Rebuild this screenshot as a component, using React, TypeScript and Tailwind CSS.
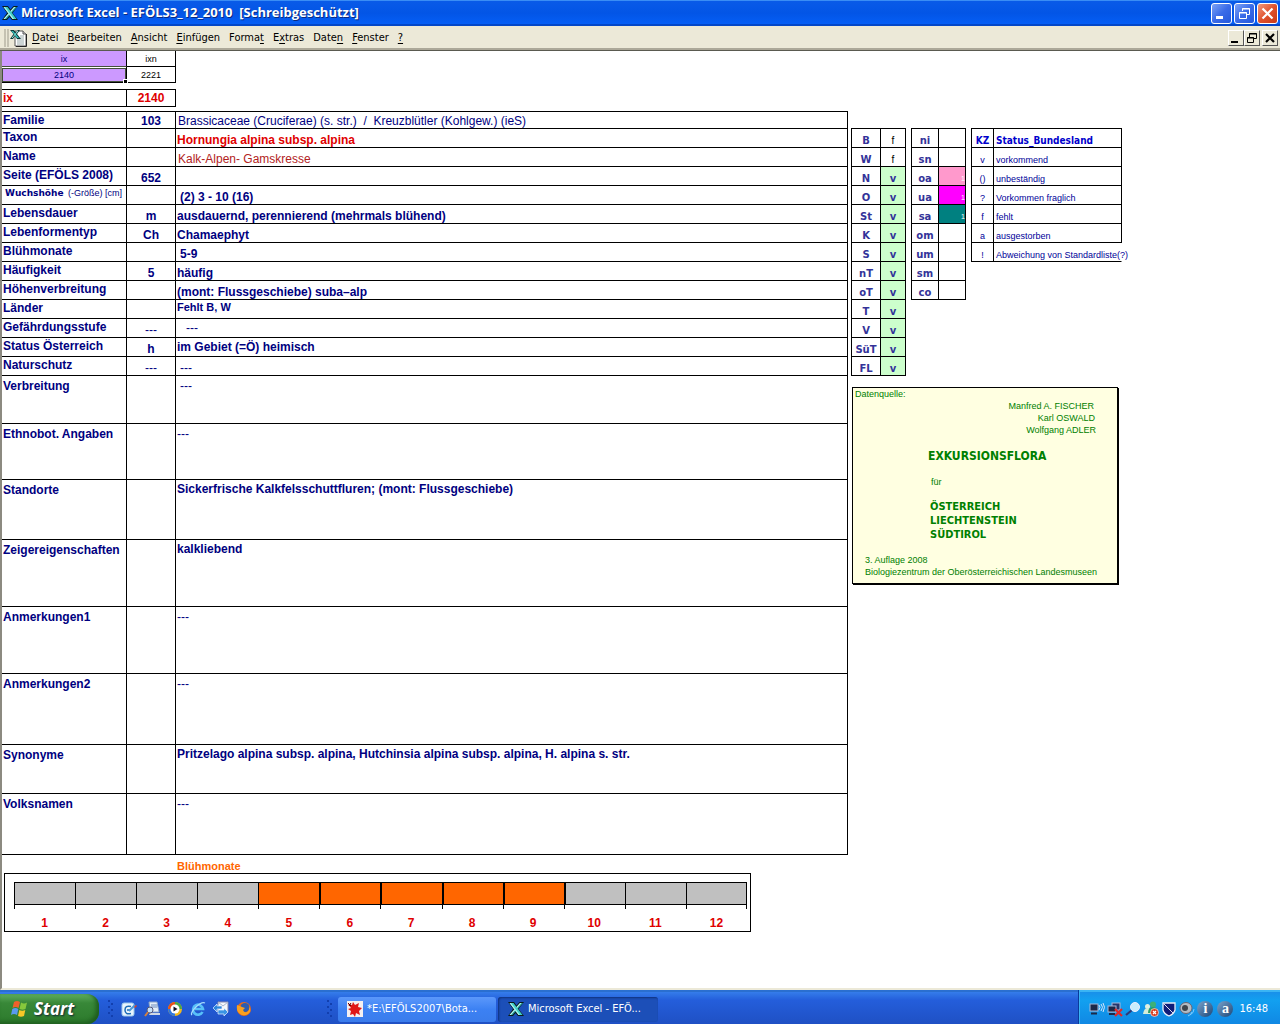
import React from "react";
import clsx from "clsx";

type Row = {
  label: string;
  code?: string;
  value: string;
  height: string;
  valueClass?: string;
};

const rows: Row[] = [
  { label: "Familie", code: "103", value: "Brassicaceae (Cruciferae) (s. str.)  /  Kreuzblütler (Kohlgew.) (ieS)", height: "h-[17px]", valueClass: "pl-0.5 align-bottom font-normal" },
  { label: "Taxon", value: "Hornungia alpina subsp. alpina", height: "h-[19px]", valueClass: "pl-px align-bottom text-[#e00000]" },
  { label: "Name", value: "Kalk-Alpen- Gamskresse", height: "h-[19px]", valueClass: "pl-0.5 align-bottom font-normal text-[#b22222]" },
  { label: "Seite (EFÖLS 2008)", code: "652", value: "", height: "h-[19px]" },
  { label: "Wuchshöhe", value: "(2) 3 - 10 (16)", height: "h-[19px]", valueClass: "pl-1 align-bottom" },
  { label: "Lebensdauer", code: "m", value: "ausdauernd, perennierend (mehrmals blühend)", height: "h-[19px]", valueClass: "pl-px align-bottom" },
  { label: "Lebenformentyp", code: "Ch", value: "Chamaephyt", height: "h-[19px]", valueClass: "pl-px align-bottom" },
  { label: "Blühmonate", value: "5-9", height: "h-[19px]", valueClass: "pl-1 align-bottom" },
  { label: "Häufigkeit", code: "5", value: "häufig", height: "h-[19px]", valueClass: "pl-px align-bottom" },
  { label: "Höhenverbreitung", value: "(mont: Flussgeschiebe) suba–alp", height: "h-[19px]", valueClass: "pl-px align-bottom" },
  { label: "Länder", value: "Fehlt B, W", height: "h-[19px]", valueClass: "pl-px align-top text-[11px]" },
  { label: "Gefährdungsstufe", code: "---", value: "---", height: "h-[19px]", valueClass: "pl-2.5 align-middle font-normal" },
  { label: "Status Österreich", code: "h", value: "im Gebiet (=Ö) heimisch", height: "h-[19px]", valueClass: "pl-px align-middle" },
  { label: "Naturschutz", code: "---", value: "---", height: "h-[19px]", valueClass: "pl-1 align-bottom font-normal" },
  { label: "Verbreitung", value: "---", height: "h-[48px] pt-0.5", valueClass: "pt-[3px] pl-1 align-top font-normal" },
  { label: "Ethnobot. Angaben", value: "---", height: "h-[56px] pt-0.5", valueClass: "pt-[3px] pl-px align-top font-normal" },
  { label: "Standorte", value: "Sickerfrische Kalkfelsschuttfluren; (mont: Flussgeschiebe)", height: "h-[60px] pt-0.5", valueClass: "pt-0.5 pl-px align-top" },
  { label: "Zeigereigenschaften", value: "kalkliebend", height: "h-[67px] pt-0.5", valueClass: "pt-0.5 pl-px align-top" },
  { label: "Anmerkungen1", value: "---", height: "h-[67px] pt-0.5", valueClass: "pt-[3px] pl-px align-top font-normal" },
  { label: "Anmerkungen2", value: "---", height: "h-[71px] pt-0.5", valueClass: "pt-[3px] pl-px align-top font-normal" },
  { label: "Synonyme", value: "Pritzelago alpina subsp. alpina, Hutchinsia alpina subsp. alpina, H. alpina s. str.", height: "h-[49px] pt-0.5", valueClass: "pt-0.5 pl-px align-top" },
  { label: "Volksnamen", value: "---", height: "h-[61px] pt-0.5", valueClass: "pt-[3px] pl-px align-top font-normal" },
];

const laender = [
  ["B", "f"], ["W", "f"], ["N", "v"], ["O", "v"], ["St", "v"], ["K", "v"], ["S", "v"],
  ["nT", "v"], ["oT", "v"], ["T", "v"], ["V", "v"], ["SüT", "v"], ["FL", "v"],
];

const stufen = [
  { name: "ni" },
  { name: "sn" },
  { name: "oa", color: "bg-[#ff99cc]" },
  { name: "ua", color: "bg-[#ff00ff]" },
  { name: "sa", color: "bg-[#008080]" },
  { name: "om" },
  { name: "um" },
  { name: "sm" },
  { name: "co" },
];

const status = [
  ["v", "vorkommend"],
  ["()", "unbeständig"],
  ["?", "Vorkommen fraglich"],
  ["f", "fehlt"],
  ["a", "ausgestorben"],
  ["!", "Abweichung von Standardliste(?)"],
];

const months = [1, 2, 3, 4, 5, 6, 7, 8, 9, 10, 11, 12];

const menu = [
  ["", "D", "atei"],
  ["", "B", "earbeiten"],
  ["", "A", "nsicht"],
  ["", "E", "infügen"],
  ["Forma", "t", ""],
  ["E", "x", "tras"],
  ["Date", "n", ""],
  ["", "F", "enster"],
  ["", "?", ""],
];

function ExcelIcon({ className }: { className?: string }) {
  return (
    <svg viewBox="0 0 16 16" className={className} aria-hidden="true">
      <path d="M0 1h6l2.500 3.500L11.500 1H16l-5.500 7 5.500 7h-6l-2.500-3L5 15H0l5-7z" fill="#0b1a1a" />
      <path d="M12 2h3L4.500 14h-3z" fill="#1f9c98" />
      <path d="M12 2h1.500L3 14H1.500z" fill="#c8f4f0" />
      <path d="M1.500 2h4L14.500 14h-4z" fill="#3fd0c8" />
      <path d="M1.500 2h1.500L12 14h-1.500z" fill="#b4f0ec" />
    </svg>
  );
}

function WorkbookIcon() {
  return (
    <svg viewBox="0 0 18 18" className="h-[18px] w-[18px]" aria-hidden="true">
      <path d="M5 2h8l3 3v12H5z" fill="#fff" stroke="#555" />
      <path d="M16.500 5v12.500H6" fill="none" stroke="#222" />
      <path d="M13 2v3h3" fill="#ccc" stroke="#555" />
      <path d="M10 7h4M10 9h4M7 11h7M7 13h7M7 15h7" stroke="#9aa" />
      <path d="M0 1h4l2 2.500L8 1h2L7 5l4 5H7L5 7 3 10H0l3.500-5z" fill="#0d3b3b" />
      <path d="M1.500 2H3l6 7H7z" fill="#35c5bd" />
      <path d="M8 2L2 9" stroke="#9be8e2" />
    </svg>
  );
}

function TitleBar() {
  const base = "flex h-[21px] w-[21px] items-center justify-center rounded-[3px] border border-white";
  return (
    <header className="flex h-[26px] items-center justify-between bg-linear-to-b from-[#0a5be8] via-[#0355e6] to-[#0660f8] px-0.5 shadow-[inset_0_1px_0_#3a8df5,inset_0_-2px_0_#0347c8]">
      <h1 className="flex items-center gap-[3px] font-['Open_Sans','Noto_Sans',sans-serif] text-[13px] font-bold whitespace-pre text-white [text-shadow:1px_1px_0_#0a2a80]">
        <ExcelIcon className="h-4 w-4" />
        {"Microsoft Excel - EFÖLS3_12_2010  [Schreibgeschützt]"}
      </h1>
      <div className="flex gap-0.5">
        <button aria-label="Minimieren" className={clsx(base, "bg-linear-to-br from-[#7ea2f5] via-[#3a6be8] to-[#2458dc]")}>
          <svg viewBox="0 0 19 19" className="h-[19px] w-[19px]"><path d="M4 12h7v3H4z" fill="#fff" /></svg>
        </button>
        <button aria-label="Wiederherstellen" className={clsx(base, "bg-linear-to-br from-[#7ea2f5] via-[#3a6be8] to-[#2458dc]")}>
          <svg viewBox="0 0 19 19" className="h-[19px] w-[19px]" fill="none" stroke="#fff">
            <path d="M7.500 7V4.500h7v6H12M7 5h8" />
            <path d="M4.500 8.500h7v6h-7zM4 9h8" />
          </svg>
        </button>
        <button aria-label="Schließen" className={clsx(base, "bg-linear-to-br from-[#f0987c] via-[#e0522c] to-[#c83a14]")}>
          <svg viewBox="0 0 19 19" className="h-[19px] w-[19px]"><path d="M4.500 4.500l10 10M14.500 4.500l-10 10" stroke="#fff" strokeWidth="2.200" /></svg>
        </button>
      </div>
    </header>
  );
}

function MenuBar() {
  const base = "flex h-4 w-4 items-center justify-center border border-t-white border-l-white border-r-[#555] border-b-[#555] bg-[#ece9d8]";
  return (
    <nav className="flex h-[25px] items-center justify-between border-b border-[#5a5a50] bg-[#ece9d8] pr-0.5 pl-1 shadow-[inset_0_-2px_0_#aca899]">
      <div className="flex items-center font-['DejaVu_Sans_Condensed','Noto_Sans',sans-serif] text-[11px] text-black">
        <span className="h-[18px] w-[5px] border-x-2 border-[#c5c2b2]" />
        <span className="mr-1 ml-px">
          <WorkbookIcon />
        </span>
        <div className="flex gap-[9px]">
          {menu.map(([pre, key, post]) => (
            <button key={pre + key + post}>
              {pre}
              <span className="underline underline-offset-2">{key}</span>
              {post}
            </button>
          ))}
        </div>
      </div>
      <div className="flex">
        <button aria-label="Mappe minimieren" className={base}>
          <svg viewBox="0 0 14 14" className="h-3.5 w-3.5"><path d="M2 10h7v2H2z" /></svg>
        </button>
        <button aria-label="Mappe wiederherstellen" className={base}>
          <svg viewBox="0 0 14 14" className="h-3.5 w-3.5" fill="none" stroke="#000">
            <path d="M4.500 6V2.500h7v5H9M4 3h8" />
            <path d="M2.500 6.500h6v5h-6zM2 7h7" />
          </svg>
        </button>
        <button aria-label="Mappe schließen" className={clsx(base, "ml-0.5")}>
          <svg viewBox="0 0 14 14" className="h-3.5 w-3.5"><path d="M3 3l8 8M11 3l-8 8" stroke="#000" strokeWidth="2.200" /></svg>
        </button>
      </div>
    </nav>
  );
}

function IndexTables() {
  return (
    <>
      <table className="w-[174px] table-fixed border-separate border-spacing-0 text-center text-[9px] leading-3">
        <tbody>
          <tr>
            <td className="h-4 w-[125px] border-r border-b border-r-black border-b-[#44503c] bg-[#cc99ff] text-[#000080]">ix</td>
            <td className="h-4 border-r border-b border-black">ixn</td>
          </tr>
          <tr>
            <td className="relative h-4 border-r border-b border-black bg-[#cc99ff] text-[#000080] shadow-[inset_0_1px_0_#fff,inset_0_2px_0_#44503c,inset_1px_0_0_#44503c,inset_-1px_-1px_0_#44503c]">
              2140
              <span className="absolute -right-0.5 -bottom-0.5 h-[5px] w-[5px] border border-white bg-black" />
            </td>
            <td className="h-4 border-r border-b border-black">2221</td>
          </tr>
        </tbody>
      </table>
      <table className="mt-1.5 w-[174px] table-fixed border-separate border-spacing-0 border-t border-black text-[12px] leading-[14px] font-bold text-[#e00000]">
        <tbody>
          <tr>
            <td className="h-[17px] w-[125px] border-r border-b border-black pl-px">ix</td>
            <td className="h-[17px] border-r border-b border-black text-center">2140</td>
          </tr>
        </tbody>
      </table>
    </>
  );
}

function SpeciesTable() {
  return (
    <table className="mt-1 w-full table-fixed border-separate border-spacing-0 border-t border-black text-[12px] leading-[14px] font-bold text-[#000080]">
      <colgroup>
        <col className="w-[125px]" />
        <col className="w-[49px]" />
        <col />
      </colgroup>
      <tbody>
        {rows.map((row) => (
          <tr key={row.label}>
            <th scope="row" className={clsx("border-r border-b border-black pl-px text-left align-top whitespace-nowrap", row.height)}>
              {row.label === "Wuchshöhe" ? (
                <span className="flex justify-between pt-px pr-1 pl-0.5 font-['DejaVu_Sans',sans-serif] text-[9px] leading-3">
                  Wuchshöhe <span className="font-['Liberation_Sans',sans-serif] font-normal">(-Größe) [cm]</span>
                </span>
              ) : (
                <span className="block pt-px">{row.label}</span>
              )}
            </th>
            <td className={clsx("border-r border-b border-black text-center align-bottom", row.code === "---" && "font-normal")}>{row.code}</td>
            <td className={clsx("border-r border-b border-black whitespace-pre", row.valueClass)}>{row.value}</td>
          </tr>
        ))}
      </tbody>
    </table>
  );
}

function MonthChart() {
  return (
    <section>
      <h2 className="mt-1 pl-[175px] text-[11px] leading-[14px] font-bold text-[#ff6600]">Blühmonate</h2>
      <div className="mr-[97px] ml-0.5 flex h-[59px] border border-black pt-2 pr-[3px] pl-[9px]">
        {months.map((m, i) => {
          const active = m >= 5 && m <= 9;
          return (
            <div key={m} className="flex flex-1 flex-col">
              <div
                className={clsx(
                  "h-[23px] border-y border-l border-black",
                  active ? "bg-[#ff6600]" : "bg-[#c0c0c0]",
                  m > 5 && m < 11 && "border-l-2",
                  i === 11 && "border-r"
                )}
              />
              <div className={clsx("h-1 border-l border-black", i === 11 && "border-r")} />
              <span className="pt-[7px] text-center text-[12px] leading-[14px] font-bold text-[#e00000]">{m}</span>
            </div>
          );
        })}
      </div>
    </section>
  );
}

function SideTables() {
  const cell = "h-[19px] border-r border-b border-black align-bottom";
  const tall = "w-[55px] table-fixed border-separate border-spacing-0 border-t border-l border-black text-center text-[10px] leading-3";
  return (
    <div className="flex items-start gap-[5px]">
      <table className={tall}>
        <tbody>
          {laender.map(([name, value]) => (
            <tr key={name}>
              <th className={clsx(cell, "w-[29px] font-['DejaVu_Sans',sans-serif] text-[#333399]")}>{name}</th>
              <td className={clsx(cell, value === "v" && "bg-[#ccffcc] font-['DejaVu_Sans',sans-serif] font-bold text-[#333399]")}>{value}</td>
            </tr>
          ))}
        </tbody>
      </table>
      <table className={tall}>
        <tbody>
          {stufen.map((s) => (
            <tr key={s.name}>
              <th className={clsx(cell, "w-[27px] font-['DejaVu_Sans',sans-serif] text-[#333399]")}>{s.name}</th>
              <td className={clsx(cell, "text-right text-[7px] text-white", s.color)}>{s.color && "1"}</td>
            </tr>
          ))}
        </tbody>
      </table>
      <table className="w-[151px] table-fixed border-separate border-spacing-0 border-t border-l border-black text-[9px] leading-3 whitespace-nowrap text-[#000099]">
        <thead className="font-['DejaVu_Sans_Condensed',sans-serif] text-[10px] text-[#0000cc]">
          <tr>
            <th className={clsx(cell, "w-[22px]")}>KZ</th>
            <th className={clsx(cell, "pl-0.5 text-left")}>Status_Bundesland</th>
          </tr>
        </thead>
        <tbody>
          {status.map(([kz, text]) => (
            <tr key={kz}>
              <td className={clsx(cell, "text-center")}>{kz}</td>
              <td className={clsx(cell, "pl-0.5", kz === "!" && "border-r-transparent")}>{text}</td>
            </tr>
          ))}
        </tbody>
      </table>
    </div>
  );
}

function SourceCard() {
  return (
    <aside className="mt-[11px] ml-px flex h-[197px] w-[266px] flex-col border border-black bg-[#ffffe1] px-0.5 text-[9px] leading-3 whitespace-nowrap text-[#008000] shadow-[1px_1px_0_#000]">
      <p>Datenquelle:</p>
      <div className="pr-[19px] text-right">
        <p className="pr-0.5">Manfred A. FISCHER</p>
        <p className="pr-px">Karl OSWALD</p>
        <p>Wolfgang ADLER</p>
      </div>
      <p className="mt-3 pl-[73px] font-['DejaVu_Sans_Condensed',sans-serif] text-[12px] leading-4 font-bold">EXKURSIONSFLORA</p>
      <p className="mt-3 pl-[76px]">für</p>
      <div className="mt-3 pl-[75px] font-['DejaVu_Sans_Condensed',sans-serif] text-[11px] leading-[14px] font-bold">
        <p>ÖSTERREICH</p>
        <p>LIECHTENSTEIN</p>
        <p>SÜDTIROL</p>
      </div>
      <div className="mt-3 pl-2.5">
        <p>3. Auflage 2008</p>
        <p>Biologiezentrum der Oberösterreichischen Landesmuseen</p>
      </div>
    </aside>
  );
}

function WindowsFlag() {
  return (
    <svg viewBox="0 0 20 20" className="h-5 w-5" aria-hidden="true">
      <path d="M4 3q3-2 6 0L8.500 9q-3-2-6 0z" fill="#f0602c" />
      <path d="M11 3.500q3 2 6 0L15.500 10q-3 1.500-6 0z" fill="#86c83c" />
      <path d="M2.300 10q3-2 6 0L7 16q-3-2-6 0z" fill="#5a9af0" />
      <path d="M9.300 11q3 1.500 6 0L14 17q-3 1.500-6 0z" fill="#f8c828" />
    </svg>
  );
}

function Grip() {
  return (
    <svg viewBox="0 0 6 20" className="h-5 w-1.5" aria-hidden="true">
      <path d="M1 1h2v2H1zM4 4h2v2H4zM1 7h2v2H1zM4 10h2v2H4zM1 13h2v2H1zM4 16h2v2H4z" fill="#123fae" />
    </svg>
  );
}

const quickLaunch = [
  {
    name: "Desktop anzeigen",
    art: (
      <>
        <rect x="1" y="2" width="12" height="13" rx="2" fill="#e8f4fc" stroke="#9cc8ec" />
        <path d="M10 5.500Q4 4 4 9t6 3.500M6 9h3" fill="none" stroke="#1c6cb8" strokeWidth="1.500" />
        <path d="M8 10l6-6" stroke="#4a98d8" strokeWidth="2" />
        <path d="M13 6l2-2 1 1-2 2z" fill="#e04020" />
      </>
    ),
  },
  {
    name: "Suche",
    art: (
      <>
        <path d="M5 1h8l2 10H6z" fill="#e4eef8" stroke="#8aa4c8" />
        <path d="M7 4h6M7 6h6" stroke="#6a8cc0" />
        <path d="M6 12h10v2H5z" fill="#cfd8e4" />
        <circle cx="6" cy="9" r="3" fill="#c4e0f8" stroke="#557" />
        <path d="M4 11l-3 4" stroke="#d08040" strokeWidth="2" />
      </>
    ),
  },
  {
    name: "Media Player",
    art: (
      <>
        <circle cx="8" cy="8" r="7" fill="#f0b820" />
        <path d="M8 1a7 7 0 0 0-7 7h7z" fill="#e85018" />
        <path d="M8 1a7 7 0 0 1 7 7H8z" fill="#48a848" />
        <path d="M1 8a7 7 0 0 0 7 7V8z" fill="#2c78e0" />
        <circle cx="8" cy="8" r="4.500" fill="#fff" />
        <path d="M6.500 5.500l4 2.500-4 2.500z" fill="#112" />
      </>
    ),
  },
  {
    name: "Internet Explorer",
    art: (
      <>
        <path d="M12.500 11A5 5 0 1 1 13 8H5" fill="none" stroke="#58c0f8" strokeWidth="2.600" />
        <path d="M2 14C-1 12 10 0 15 2" fill="none" stroke="#a8dcfc" strokeWidth="1.300" />
      </>
    ),
  },
  {
    name: "Outlook Express",
    art: (
      <>
        <path d="M5 1h10v10H5z" fill="#f4f8fc" stroke="#88a" />
        <path d="M5 1l5 4 5-4" fill="none" stroke="#a8b4cc" />
        <path d="M0 7l4-4v2h5v3H4v3z" fill="#2c84dc" stroke="#e8f4ff" strokeWidth=".7" />
        <path d="M15 11l-4-4v2H5v4h6v2z" fill="#3a94e4" stroke="#e8f4ff" strokeWidth=".7" />
      </>
    ),
  },
  {
    name: "Firefox",
    art: (
      <>
        <circle cx="8" cy="8" r="7" fill="#e86818" />
        <circle cx="9" cy="6.500" r="4.500" fill="#2c5cb0" />
        <path d="M1 4q3 1 5 2l3 1-2 2q1 3 4 2 3-2 2-6 3 5-1 8-5 3-9-1Q0 9 1 4z" fill="#f8a020" />
      </>
    ),
  },
];

const tray = [
  <>
    <rect x="1" y="3" width="8" height="7" fill="#1c2848" stroke="#a8b8d8" />
    <path d="M2 12.500h6" stroke="#1c2848" strokeWidth="2" />
    <path d="M10 4q2 2 0 5M12 3q3 3 0 7M14 2q3 4 0 9" fill="none" stroke="#d4e4f8" />
  </>,
  <>
    <rect x="5" y="2" width="8" height="7" fill="#24366c" stroke="#a8b8d8" />
    <rect x="1" y="5" width="8" height="6" fill="#1c2848" stroke="#a8b8d8" />
    <path d="M2 13h6" stroke="#1c2848" strokeWidth="2" />
    <path d="M8 8l7 7M15 8l-7 7" stroke="#e02828" strokeWidth="2.200" />
  </>,
  <>
    <circle cx="10" cy="6" r="4.500" fill="#c8ecfc" stroke="#eef" />
    <path d="M6.500 9.500L1 14" stroke="#303878" strokeWidth="2.200" />
  </>,
  <>
    <circle cx="4.500" cy="5.500" r="2.500" fill="#e0f0e0" />
    <circle cx="10" cy="3.500" r="3" fill="#3cb078" />
    <path d="M0 13q1-6 4.500-6T9 13z" fill="#d4ecd8" />
    <path d="M5 12q0-6 5-6t5 6z" fill="#2c9c64" />
    <circle cx="11.500" cy="11.500" r="4" fill="#d83c20" stroke="#fff" strokeWidth=".6" />
    <path d="M10 10l3 3M13 10l-3 3" stroke="#fff" strokeWidth="1.200" />
  </>,
  <>
    <path d="M2 2h12v7q-1 4-6 6-5-2-6-6z" fill="#101c78" stroke="#e8eef8" strokeWidth="1.300" />
    <path d="M3 3l9 9" stroke="#dde" />
  </>,
  <>
    <ellipse cx="7" cy="7" rx="6" ry="5.500" fill="#b4bcc4" stroke="#667" />
    <circle cx="6" cy="7" r="3" fill="#3c444c" />
    <path d="M11 14q4-2 4-6M9 15q3-1 4-4" fill="none" stroke="#7ccbff" />
  </>,
];

function Taskbar() {
  return (
    <footer className="flex h-[34px] items-stretch bg-linear-to-b from-[#3a84ee] via-[#245edb] via-30% to-[#1f50c4] text-white shadow-[inset_0_2px_0_#2a6fd0]">
      <button className="mt-1 flex w-[99px] items-center gap-1 rounded-r-xl bg-linear-to-b from-[#5fae5f] via-[#388838] via-30% to-[#2c7a2c] pl-2.5 font-['Open_Sans','Noto_Sans',sans-serif] text-[17px] font-bold italic shadow-[inset_-3px_-2px_4px_#1e5c1e] [text-shadow:1px_1px_2px_#123]">
        <WindowsFlag />
        Start
      </button>
      <div className="flex items-center pt-1 pl-2">
        <Grip />
        <div className="flex gap-[7px] pl-2">
          {quickLaunch.map((q) => (
            <button key={q.name} aria-label={q.name}>
              <svg viewBox="0 0 16 16" className="h-4 w-4">{q.art}</svg>
            </button>
          ))}
        </div>
      </div>
      <div className="ml-[74px] flex items-center pt-1">
        <Grip />
      </div>
      <div className="flex items-center gap-0.5 pt-1 pl-1.5 font-['DejaVu_Sans_Condensed','Noto_Sans',sans-serif] text-[11px]">
        <button className="flex h-[25px] w-[158px] items-center gap-1 rounded-[3px] bg-linear-to-b from-[#5b98fb] via-[#3c81f3] to-[#3a7cec] pl-[9px]">
          <svg viewBox="0 0 16 16" className="h-4 w-4">
            <path d="M0 0h16v16H0z" fill="#f4f0f0" />
            <path d="M6 1l2 3 4-2-1 4 4 1-3 3 1 4-4-2-1 4-2-3-3 1 1-4-3-2 3-1-3-4 4 1z" fill="#e01818" />
            <path d="M1 2l3 3M4 2L2 5" stroke="#600" />
          </svg>
          *E:\EFÖLS2007\Bota...
        </button>
        <button className="flex h-[25px] w-[160px] items-center gap-1 rounded-[3px] bg-[#1c4fb8] pl-2.5 shadow-[inset_1px_1px_2px_#10327c]">
          <ExcelIcon className="h-4 w-4" />
          Microsoft Excel - EFÖ...
        </button>
      </div>
      <div className="ml-auto flex items-center gap-0.5 border-l border-[#0a3a9c] bg-linear-to-b from-[#1a8ce8] via-[#12a0f0] via-30% to-[#1188e4] pt-1 pr-3 pl-2.5 shadow-[inset_1px_2px_0_#3ab4f4]">
        {tray.map((art, i) => (
          <svg key={i} viewBox="0 0 16 16" className="h-4 w-4" aria-hidden="true">{art}</svg>
        ))}
        <span className="flex h-4 w-4 items-center justify-center rounded-full bg-linear-to-br from-[#7ca4cc] to-[#1c4878] font-['Liberation_Serif',serif] text-[14px] leading-4 font-bold">i</span>
        <span className="ml-0.5 flex h-4 w-4 items-center justify-center rounded-full bg-linear-to-br from-[#7ca4cc] to-[#1c4878] font-['Liberation_Serif',serif] text-[14px] leading-3 font-bold">a</span>
        <time className="ml-1 font-['DejaVu_Sans_Condensed','Noto_Sans',sans-serif] text-[11px]">16:48</time>
      </div>
    </footer>
  );
}

export default function App() {
  return (
    <div className="flex min-h-screen flex-col bg-white font-['Liberation_Sans',Arial,sans-serif] text-black">
      <TitleBar />
      <MenuBar />
      {/* Sheet */}
      <main className="grid flex-1 grid-cols-[2fr_1fr] gap-[3px] border-b-2 border-l-2 border-b-[#ece9d8] border-l-[#8c8a80] pr-1.5">
        <div>
          <IndexTables />
          <SpeciesTable />
          <MonthChart />
        </div>
        <div className="pt-[77px]">
          <SideTables />
          <SourceCard />
        </div>
      </main>
      <Taskbar />
    </div>
  );
}
